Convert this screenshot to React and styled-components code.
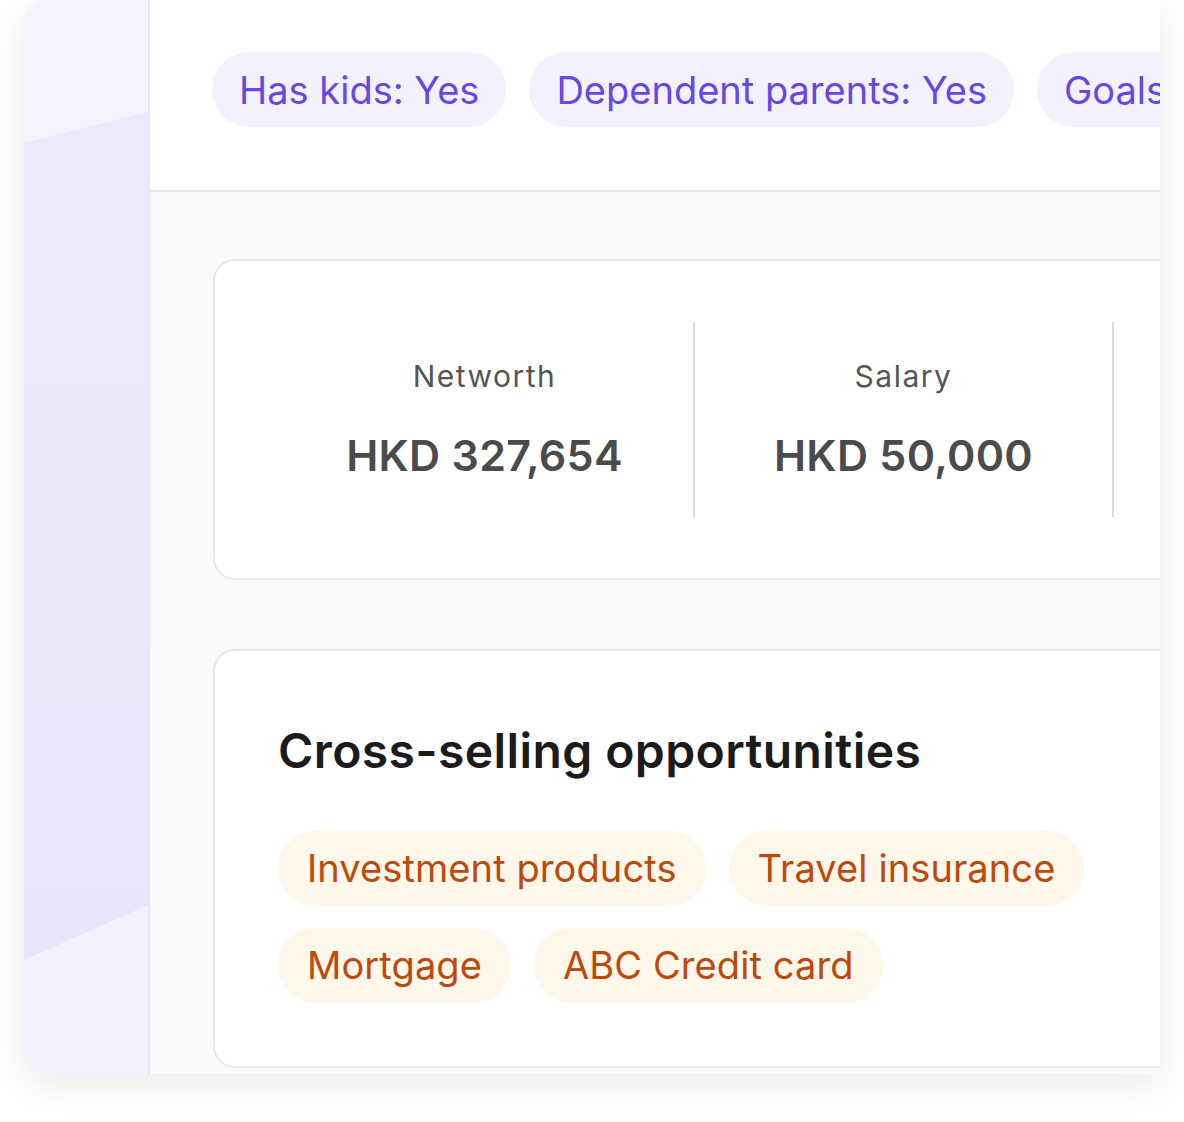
import React from "react";
import styled, { createGlobalStyle } from "styled-components";

const GlobalStyle = createGlobalStyle`
  html, body {
    margin: 0;
    padding: 0;
    background: #ffffff;
  }
  body {
    font-family: Inter, "Noto Sans", "Liberation Sans", sans-serif;
    -webkit-font-smoothing: antialiased;
  }
`;

// page frame

const Page = styled.div`
  width: 1184px;
  height: 1122px;
  overflow: hidden;
`;

const Frame = styled.div`
  margin-left: 24px;
  width: 1136px;
  height: 1074px;
  display: flex;
  border-radius: 22px 0 0 22px;
  overflow: hidden;
  background: #f9f9f9;
  box-shadow: 0 10px 36px rgba(20, 20, 40, 0.09);
`;

const Sidebar = styled.div`
  width: 124px;
  flex-shrink: 0;
  display: flex;
  background: linear-gradient(180deg, #f5f3fe 0%, #f3f1fd 100%);
  border-right: 2px solid #e8e7f0;
`;

const Band = styled.div`
  flex: 1;
  background: linear-gradient(180deg, #ebe9fb 0%, #e7e5f9 100%);
  clip-path: polygon(0 143px, 100% 112px, 100% 905px, 0 960px);
`;

const Main = styled.div`
  flex: 1;
  min-width: 0;
  display: flex;
  flex-direction: column;
  overflow: hidden;
`;

// header with profile tags

const Header = styled.div`
  height: 192px;
  flex-shrink: 0;
  box-sizing: border-box;
  background: #ffffff;
  border-bottom: 2px solid #e7e7e7;
  padding: 52px 0 0 62px;
  display: flex;
  align-items: flex-start;
  gap: 23px;
  white-space: nowrap;
  overflow: hidden;
`;

const Tag = styled.span`
  display: inline-flex;
  align-items: center;
  height: 75px;
  padding: 0 ${(p) => (p.$tone === "orange" ? 29 : 27)}px;
  border-radius: 38px;
  font-size: 38px;
  font-weight: 400;
  letter-spacing: ${(p) => (p.$tone === "orange" ? "0.1px" : "0")};
  flex-shrink: 0;
  background: ${(p) => (p.$tone === "orange" ? "#fff7e9" : "#f3f1fe")};
  color: ${(p) => (p.$tone === "orange" ? "#bb4a0c" : "#6848e2")};
`;

const Body = styled.div`
  padding: 67px 0 0 63px;
  display: flex;
  flex-direction: column;
  gap: 69px;
`;

const Card = styled.div`
  width: 1300px;
  box-sizing: border-box;
  background: #ffffff;
  border: 2px solid #e7e7e7;
  border-radius: 22px;
`;

// stats card

const StatsCard = styled(Card)`
  height: 321px;
  display: flex;
  align-items: center;
  padding-left: 61px;
`;

const Stat = styled.div`
  width: 419px;
  height: 195px;
  flex-shrink: 0;
  box-sizing: border-box;
  border-right: 2px solid #dcdcdc;
  display: flex;
  flex-direction: column;
  align-items: center;
  justify-content: center;
  gap: 36px;
`;

const StatLabel = styled.div`
  font-size: 30px;
  letter-spacing: 1.5px;
  color: #555555;
  line-height: 1.2;
`;

const StatValue = styled.div`
  font-size: 43px;
  font-weight: 600;
  letter-spacing: 0.3px;
  color: #4b4b4b;
  line-height: 1.2;
`;

// cross-selling card

const SellCard = styled(Card)`
  padding: 71px 63px 63px 63px;
`;

const Title = styled.h2`
  margin: 0 0 51px 0;
  font-size: 48px;
  font-weight: 600;
  letter-spacing: 0.4px;
  line-height: 1.2;
  color: #1b1b1b;
`;

const TagWrap = styled.div`
  display: flex;
  flex-wrap: wrap;
  gap: 22px 23px;
  width: 820px;
`;

const profileTags = ["Has kids: Yes", "Dependent parents: Yes", "Goals: Retirement"];

const stats = [
  { label: "Networth", value: "HKD 327,654" },
  { label: "Salary", value: "HKD 50,000" },
];

const opportunities = ["Investment products", "Travel insurance", "Mortgage", "ABC Credit card"];

const App = () => {
  return (
    <Page>
      <GlobalStyle />
      <Frame>
        <Sidebar>
          <Band />
        </Sidebar>
        <Main>
          <Header>
            {profileTags.map((t) => (
              <Tag key={t}>{t}</Tag>
            ))}
          </Header>
          <Body>
            <StatsCard>
              {stats.map((s) => (
                <Stat key={s.label}>
                  <StatLabel>{s.label}</StatLabel>
                  <StatValue>{s.value}</StatValue>
                </Stat>
              ))}
            </StatsCard>
            <SellCard>
              <Title>Cross-selling opportunities</Title>
              <TagWrap>
                {opportunities.map((o) => (
                  <Tag key={o} $tone="orange">{o}</Tag>
                ))}
              </TagWrap>
            </SellCard>
          </Body>
        </Main>
      </Frame>
    </Page>
  );
};

export default App;
